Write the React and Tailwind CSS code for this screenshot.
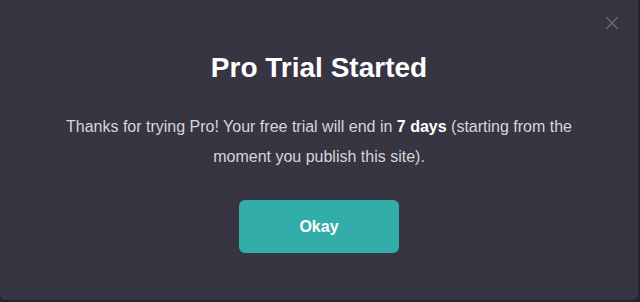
import { X } from "lucide-react";

export default function App() {
  return (
    <div className="w-[640px] h-[302px] bg-[#26252d] overflow-hidden">
      <div
        className="relative w-[638px] h-[300px] bg-[#363541] rounded-b-[6px] flex flex-col items-center"
        style={{ fontFamily: '"Liberation Sans", Arial, sans-serif' }}
      >
        <button className="absolute top-[12px] right-[15px] text-[#6e6d7a]">
          <X size={22} strokeWidth={1.3} />
        </button>
        <h1 className="mt-[52px] text-[28px] leading-[32px] font-bold text-white">
          Pro Trial Started
        </h1>
        <p className="mt-[28px] w-[520px] text-center text-[16px] leading-[30px] text-[#d6d6dc]">
          Thanks for trying Pro! Your free trial will end in{" "}
          <b className="text-white">7 days</b> (starting from the moment you publish this site).
        </p>
        <button className="mt-[28px] w-[160px] h-[53px] rounded-[6px] bg-[#33ada9] text-white font-bold text-[16px]">
          Okay
        </button>
      </div>
    </div>
  );
}
